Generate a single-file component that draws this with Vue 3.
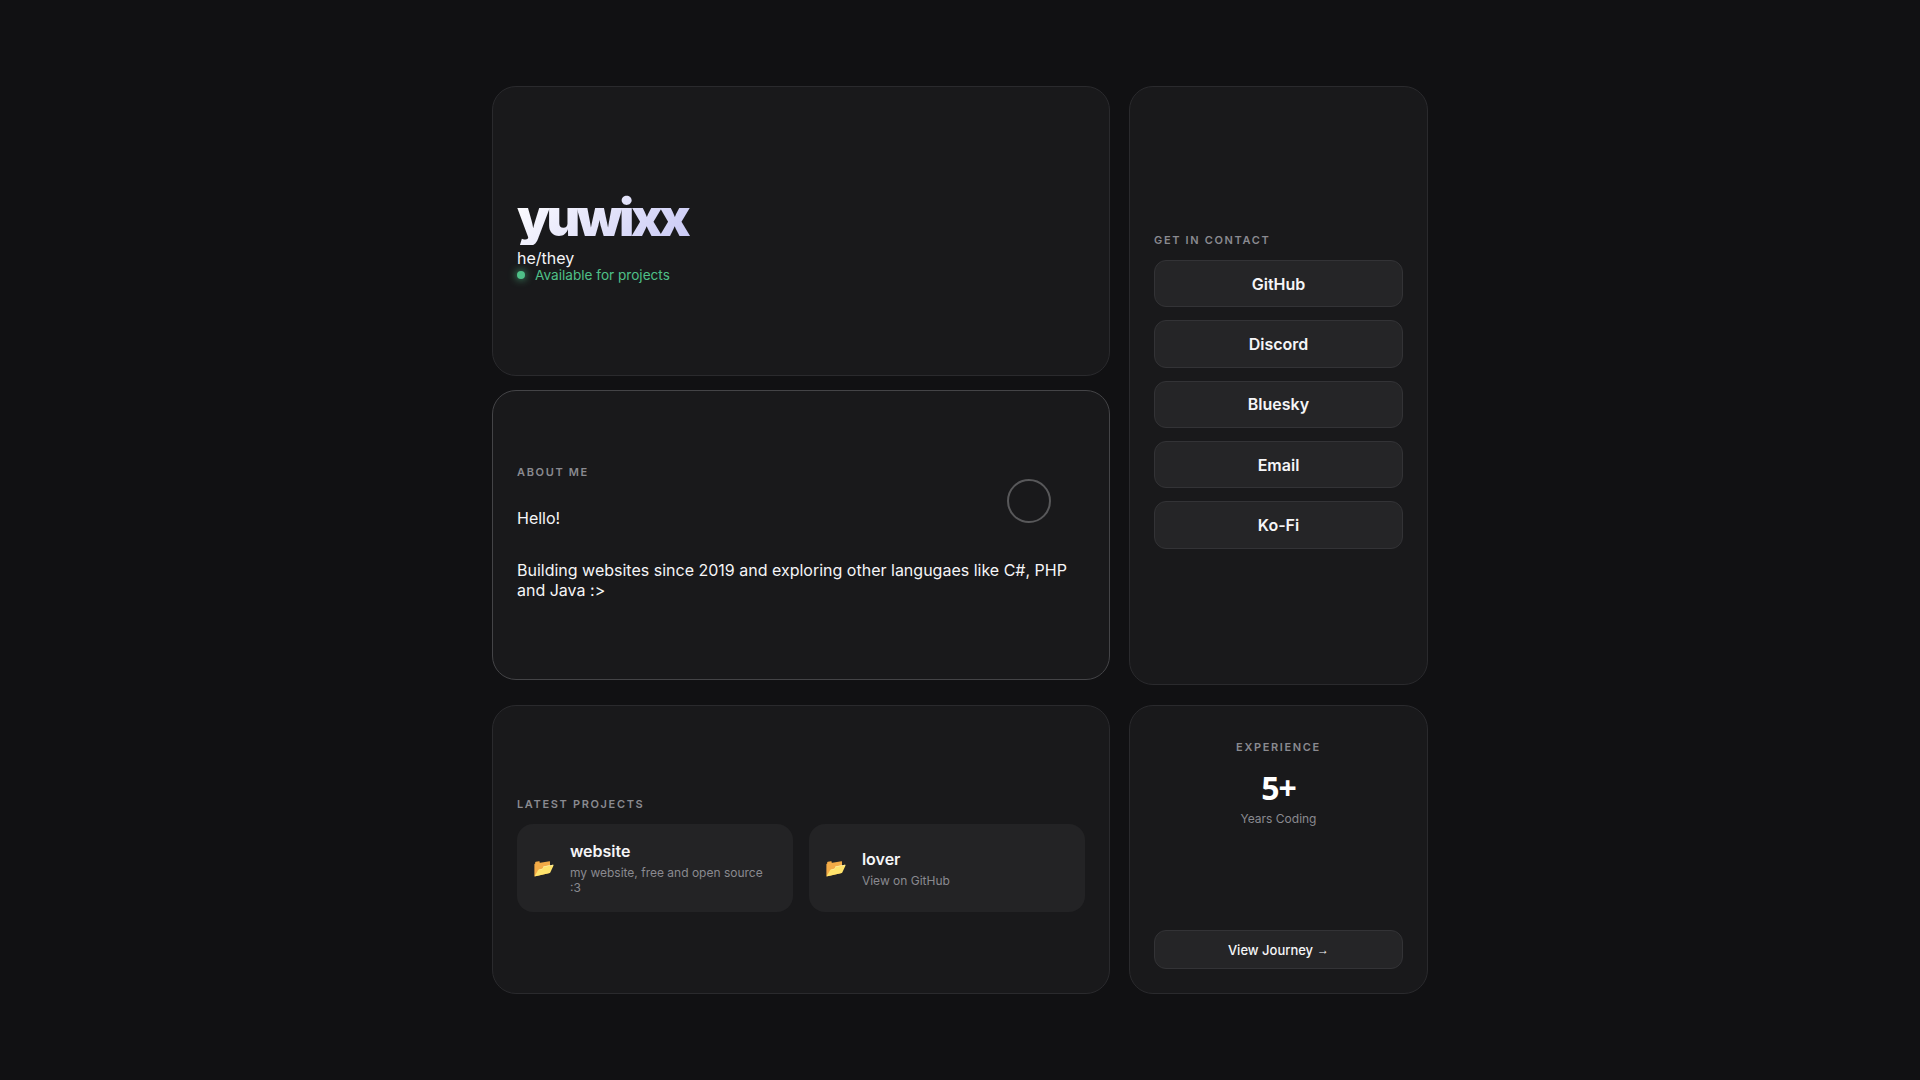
<template>
  <div class="page">
    <main class="bento">
      <section class="card hero">
        <h1 class="name">yuwixx</h1>
        <p class="pronouns">he/they</p>
        <div class="status">
          <span class="dot"></span>
          <span>Available for projects</span>
        </div>
      </section>

      <section class="card contact">
        <h2 class="label">Get in contact</h2>
        <div class="links">
          <a v-for="link in links" :key="link" class="link-btn" href="#">{{ link }}</a>
        </div>
      </section>

      <section class="card about">
        <h2 class="label">About me</h2>
        <p class="about-text">Hello!</p>
        <p class="about-text">Building websites since 2019 and exploring other langugaes like C#, PHP and Java :&gt;</p>
        <div class="cursor"></div>
      </section>

      <section class="card projects">
        <h2 class="label">Latest projects</h2>
        <div class="project-list">
          <a v-for="p in projects" :key="p.name" class="project" href="#">
            <span class="folder">📂</span>
            <span class="project-info">
              <span class="project-name">{{ p.name }}</span>
              <span class="project-desc">{{ p.desc }}</span>
            </span>
          </a>
        </div>
      </section>

      <section class="card experience">
        <h2 class="label">Experience</h2>
        <div class="big">5+</div>
        <div class="sub">Years Coding</div>
        <a class="journey" href="#">View Journey <span class="arrow">→</span></a>
      </section>
    </main>
  </div>
</template>

<script setup>
const links = ['GitHub', 'Discord', 'Bluesky', 'Email', 'Ko-Fi']

const projects = [
  { name: 'website', desc: 'my website, free and open source :3' },
  { name: 'lover', desc: 'View on GitHub' }
]
</script>

<style>
body {
  margin: 0;
  background: #111113;
}
</style>

<style scoped>
.page {
  min-height: 100vh;
  display: flex;
  align-items: center;
  justify-content: center;
  font-family: Inter, "Liberation Sans", sans-serif;
  color: #fff;
  background: #111113;
}

.bento {
  width: 936px;
  display: grid;
  grid-template-columns: 618px 1fr;
  grid-template-rows: 290px 288.5px 289.5px;
  gap: 20px 19px;
}

.card {
  box-sizing: border-box;
  background: #19191b;
  border: 1px solid #2a2a2d;
  border-radius: 24px;
  padding: 36px 24px 24px;
  display: flex;
  flex-direction: column;
  justify-content: center;
  position: relative;
}

.name {
  margin: 0;
  font-size: 52px;
  font-weight: 900;
  line-height: 54.6px;
  letter-spacing: -0.067em;
  width: fit-content;
  padding-right: 4px;
  background: linear-gradient(135deg, #fff 0%, #c7c7f5 100%);
  -webkit-background-clip: text;
  background-clip: text;
  color: transparent;
}

.pronouns {
  margin: 3.4px 0 0;
  font-size: 16px;
  line-height: 18px;
  color: #f5f5f7;
}

.status {
  display: flex;
  align-items: center;
  gap: 10px;
  margin-top: 0.5px;
  font-size: 13.6px;
  line-height: 16px;
  color: #4fc088;
}

.dot {
  width: 8px;
  height: 8px;
  border-radius: 50%;
  background: #4fc088;
  box-shadow: 0 0 8px #4fc088;
}

.contact {
  grid-column: 2;
  grid-row: span 2;
  padding-top: 35px;
}

.label {
  margin: 0 0 13px;
  font-size: 11px;
  font-weight: 600;
  line-height: 14px;
  letter-spacing: 0.15em;
  text-transform: uppercase;
  color: #8a8a90;
}

.links {
  display: flex;
  flex-direction: column;
  gap: 12.8px;
}

.link-btn {
  height: 47.5px;
  box-sizing: border-box;
  display: flex;
  align-items: center;
  justify-content: center;
  background: #252527;
  border: 1px solid #333336;
  border-radius: 12px;
  color: #f5f5f7;
  font-size: 16px;
  font-weight: 600;
  text-decoration: none;
}

.about {
  border-color: #444447;
  margin-bottom: -1px;
  transform: translateY(-6px);
}

.about .label {
  margin-bottom: 29px;
}

.about-text {
  margin: 0 0 32px;
  font-size: 16px;
  line-height: 1.25;
  color: #f5f5f7;
}

.about-text:last-of-type {
  margin-bottom: 16px;
}

.cursor {
  position: absolute;
  left: 514px;
  top: 88px;
  width: 44px;
  height: 44px;
  box-sizing: border-box;
  border: 2px solid #58585a;
  border-radius: 50%;
}

.projects {
  padding-top: 35px;
}

.project-list {
  display: grid;
  grid-template-columns: 1fr 1fr;
  gap: 16px;
}

.project {
  display: flex;
  align-items: center;
  gap: 15px;
  padding: 17px 24px 17px 16px;
  background: #232325;
  border-radius: 16px;
  text-decoration: none;
}

.folder {
  font-size: 17.6px;
  font-family: "Noto Color Emoji", sans-serif;
}

.project-info {
  display: flex;
  flex-direction: column;
}

.project-name {
  font-size: 16px;
  font-weight: 600;
  line-height: 20px;
  color: #f5f5f7;
}

.project-desc {
  font-size: 12px;
  line-height: 15px;
  color: #8a8a90;
  margin-top: 4px;
}

.experience {
  align-items: center;
  justify-content: flex-start;
  padding-top: 24px;
}

.experience .label {
  margin: 10.5px 0 15px;
}

.big {
  font-family: "Noto Sans", sans-serif;
  font-size: 32px;
  font-weight: 700;
  line-height: 1.2;
  letter-spacing: -1px;
}

.sub {
  font-size: 12px;
  line-height: 15px;
  color: #8a8a90;
  margin-top: 4px;
}

.journey {
  margin-top: auto;
  align-self: stretch;
  height: 39px;
  box-sizing: border-box;
  display: flex;
  align-items: center;
  justify-content: center;
  gap: 4px;
  background: #252527;
  border: 1px solid #333336;
  border-radius: 12px;
  color: #f5f5f7;
  font-size: 13px;
  font-weight: 500;
  text-decoration: none;
}

.arrow {
  font-family: "Liberation Sans", sans-serif;
  font-size: 12px;
}
</style>
